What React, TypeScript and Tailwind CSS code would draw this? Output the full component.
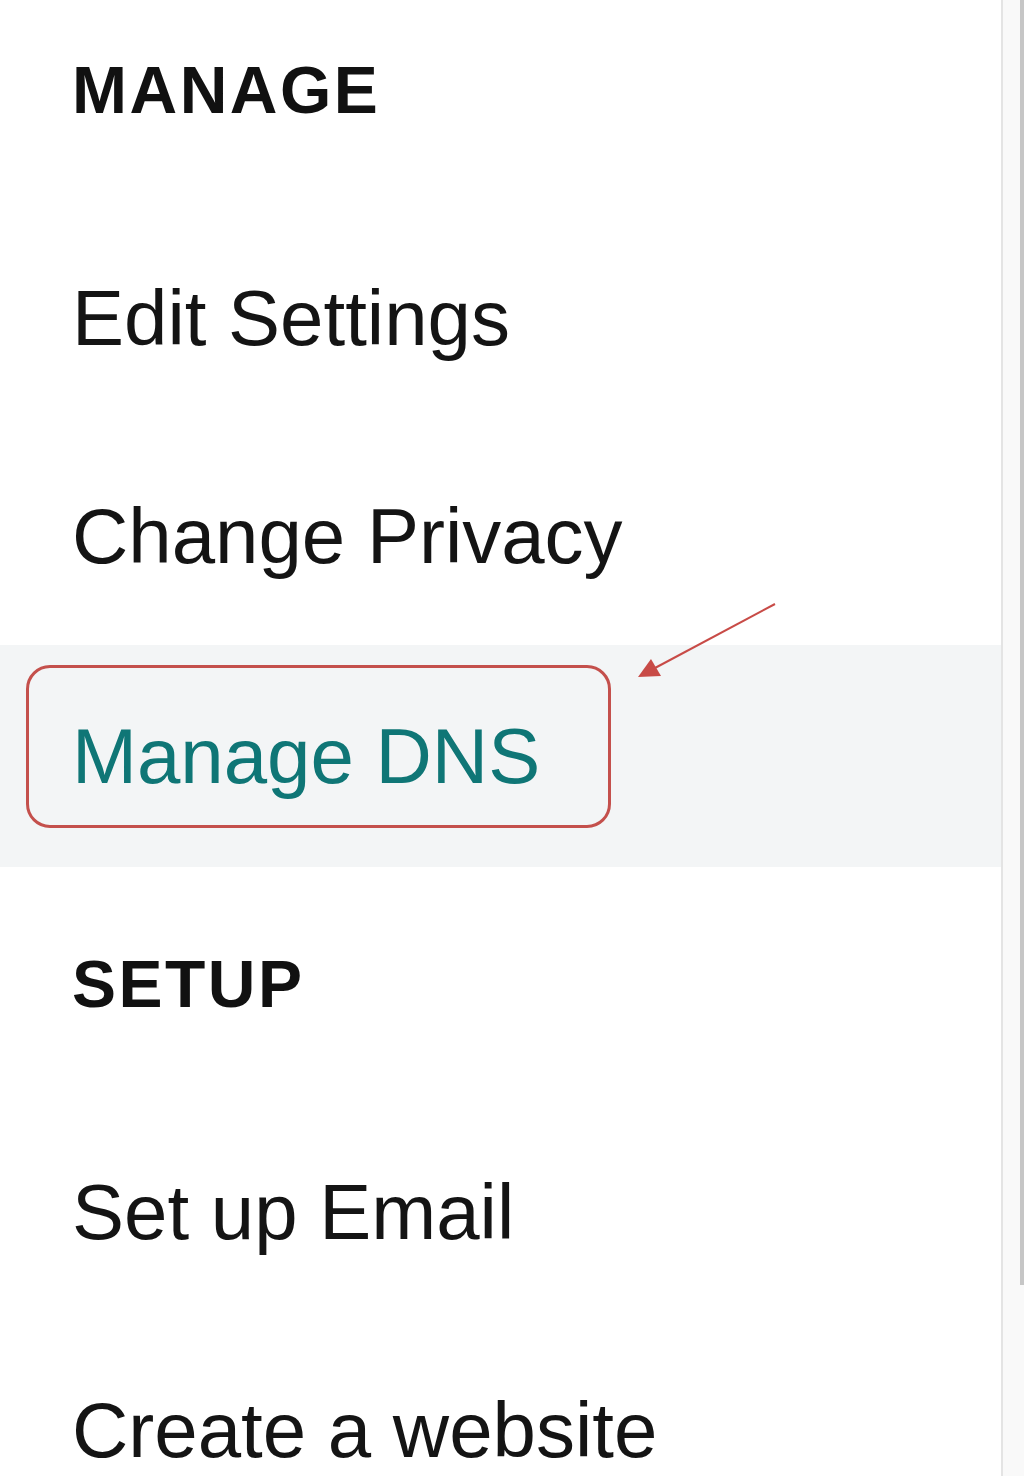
import React from 'react';

const font = { fontFamily: '"Liberation Sans", Arial, Helvetica, sans-serif' };

function Heading({ children }: { children: React.ReactNode }) {
    return (
        <div className="pl-[72px] text-[66px] font-bold leading-[78px] tracking-[2.5px] text-[#111111]">
            {children}
        </div>
    );
}

function Item({ label, active = false }: { label: string; active?: boolean }) {
    if (active) {
        return (
            <div className="relative flex h-[222px] items-center bg-[#f3f5f6] pl-[72px]">
                <span className="text-[78px] leading-[90px] text-[#0f7676]">{label}</span>
                {/* annotation box */}
                <div className="absolute left-[26px] top-[20px] h-[163px] w-[585px] rounded-[24px] border-[3px] border-[#c4504c]" />
            </div>
        );
    }
    return (
        <div className="flex h-[218px] items-center pl-[72px]">
            <span className="text-[78px] leading-[90px] text-[#141414]">{label}</span>
        </div>
    );
}

export default function App() {
    return (
        <div className="flex h-[1476px] w-[1024px] overflow-hidden bg-white" style={font}>
            <div className="relative w-[1001px] shrink-0 bg-white">
                <div className="pt-[51px]">
                    <Heading>MANAGE</Heading>
                </div>
                <div className="mt-[80px]">
                    <Item label="Edit Settings" />
                    <Item label="Change Privacy" />
                    <Item label="Manage DNS" active />
                </div>
                <div className="mt-[78px]">
                    <Heading>SETUP</Heading>
                </div>
                <div className="mt-[80px]">
                    <Item label="Set up Email" />
                    <Item label="Create a website" />
                </div>

                {/* red arrow pointing at the box */}
                <svg className="absolute left-0 top-0" width="1001" height="800" viewBox="0 0 1001 800">
                    <line x1="775" y1="604" x2="655" y2="668" stroke="#c84b47" strokeWidth="2" />
                    <polygon points="638,677 651,659 661,676" fill="#c84b47" />
                </svg>
            </div>

            {/* scrollbar */}
            <div className="flex w-[23px] shrink-0 border-l-2 border-[#e4e4e4] bg-[#f9f9f9]">
                <div className="ml-auto h-[1285px] w-[4px] bg-[#c6c6c6]" />
            </div>
        </div>
    );
}
